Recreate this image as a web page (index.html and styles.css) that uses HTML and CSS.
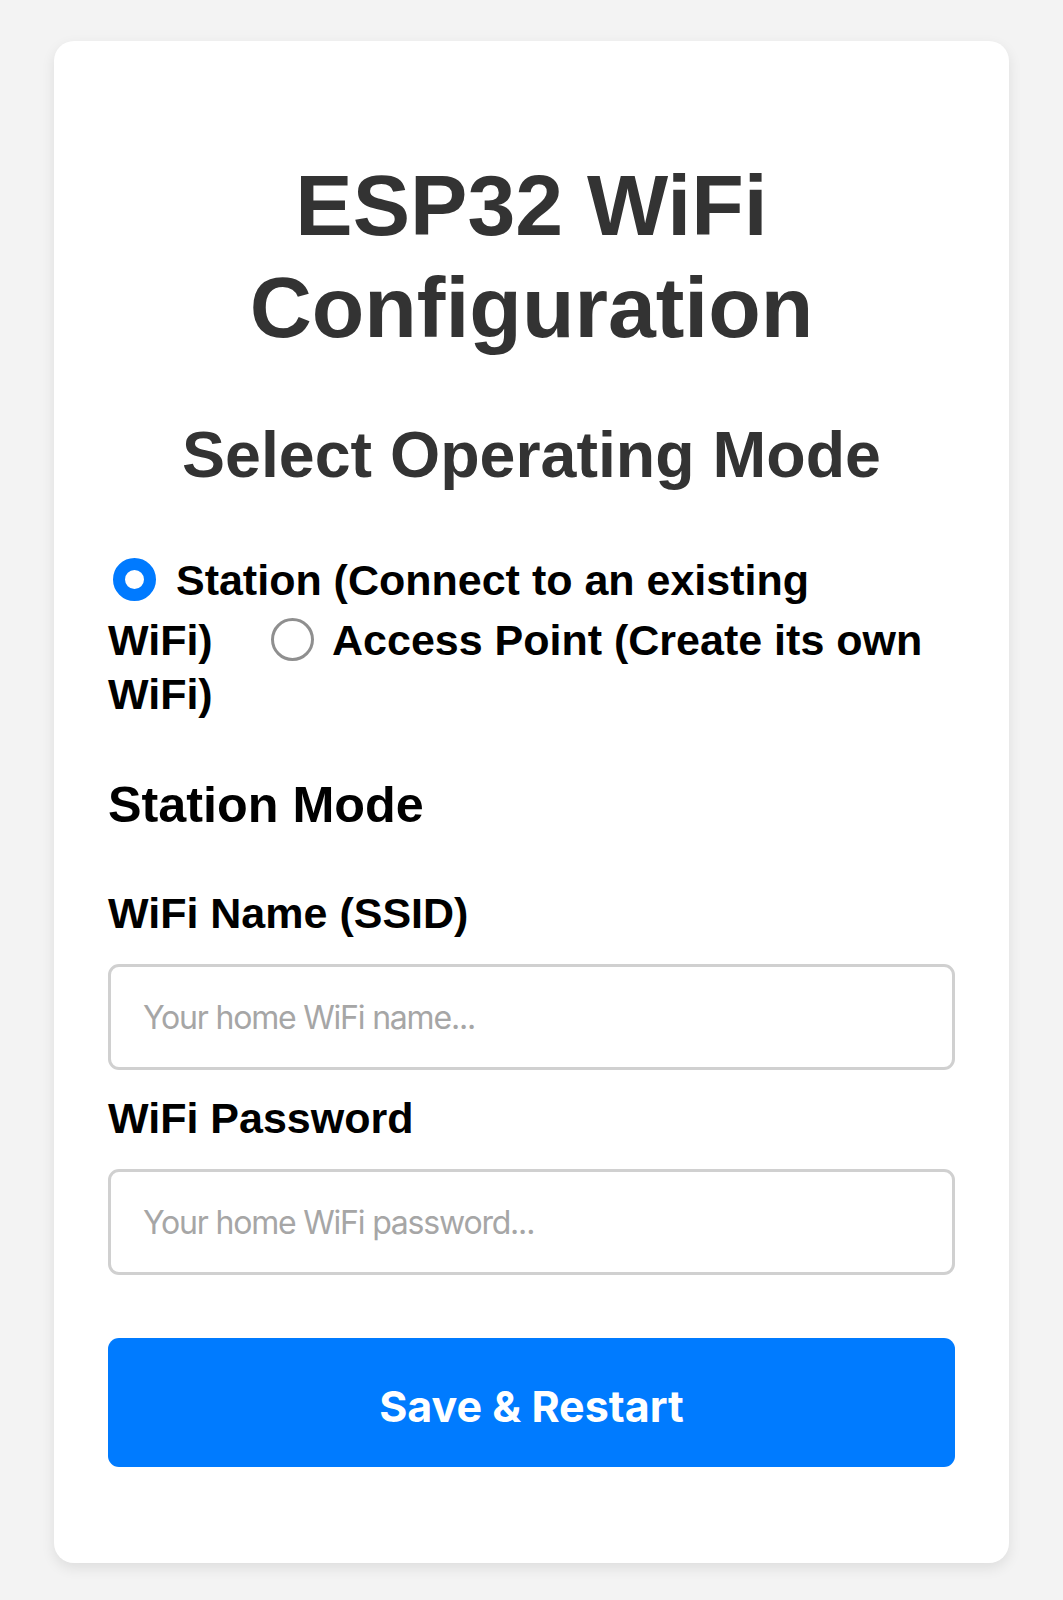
FILE: index.html
```html
<!DOCTYPE html>
<html lang="en">
<head>
<meta charset="utf-8">
<title>ESP32 WiFi Configuration</title>
<link rel="stylesheet" href="styles.css">
</head>
<body>
<main class="card">
  <h1 class="title">ESP32 WiFi Configuration</h1>
  <h2 class="subtitle">Select Operating Mode</h2>
  <div class="modes"><input class="radio" type="radio" name="mode" id="sta" checked> <label class="mode-label" for="sta">Station (Connect to an existing WiFi)</label> <input class="radio" type="radio" name="mode" id="ap"> <label class="mode-label" for="ap">Access Point (Create its own WiFi)</label></div>
  <h3 class="section">Station Mode</h3>
  <label class="field-label" for="ssid">WiFi Name (SSID)</label>
  <input class="field" id="ssid" type="text" placeholder="Your home WiFi name...">
  <label class="field-label" for="pass">WiFi Password</label>
  <input class="field" id="pass" type="password" placeholder="Your home WiFi password...">
  <button class="save" type="button">Save &amp; Restart</button>
</main>
</body>
</html>
```

FILE: styles.css
```css
html, body {
  margin: 0;
  padding: 0;
}
body {
  background: #f3f3f3;
  font-family: "Liberation Sans", Arial, sans-serif;
  padding: 41px 54px 37px;
}
.card {
  background: #ffffff;
  border-radius: 20px;
  box-shadow: 0 5px 14px rgba(0, 0, 0, 0.09);
  padding: 54px;
  display: flex;
  flex-direction: column;
}
.title {
  margin: 59px 0 0;
  font-size: 86px;
  line-height: 102px;
  font-weight: 700;
  color: #333333;
  text-align: center;
}
.subtitle {
  margin: 60px 0 0;
  font-size: 64.5px;
  line-height: 74px;
  font-weight: 700;
  color: #333333;
  text-align: center;
}
.modes {
  margin-top: 55px;
  font-size: 43px;
  line-height: 54px;
  font-weight: 700;
  color: #000000;
}
.radio {
  -webkit-appearance: none;
  appearance: none;
  display: inline-block;
  box-sizing: border-box;
  width: 43px;
  height: 43px;
  margin: 11px 8px 0 5px;
  vertical-align: -6px;
  border-radius: 50%;
  border: 3px solid #8f8f8f;
  background: #ffffff;
}
.radio:checked {
  border: 12px solid #007aff;
}
.mode-label {
  margin-right: 41px;
}
.section {
  margin: 55px 0 0;
  font-size: 50.3px;
  line-height: 58px;
  font-weight: 700;
  color: #000000;
}
.field-label {
  display: block;
  font-size: 43px;
  line-height: 50px;
  font-weight: 700;
  color: #000000;
  margin-bottom: 26px;
}
.section + .field-label {
  margin-top: 54px;
}
.field {
  box-sizing: border-box;
  height: 106px;
  width: 100%;
  margin: 0 0 23px;
  padding: 0 32px;
  border: 3px solid #d0d0d0;
  border-radius: 11px;
  font-family: Inter, "Noto Sans", sans-serif;
  font-size: 32px;
  letter-spacing: -1.2px;
  color: #000000;
  background: #ffffff;
  outline: none;
}
.field::placeholder {
  color: #a6a6a6;
}
.save {
  box-sizing: border-box;
  margin: 40px 0 42px;
  height: 129px;
  width: 100%;
  padding: 6px 0 0;
  border: none;
  border-radius: 11px;
  background: #007bff;
  color: #ffffff;
  font-family: Inter, "Noto Sans", sans-serif;
  font-size: 43px;
  font-weight: 700;
  letter-spacing: 0;
}
```
